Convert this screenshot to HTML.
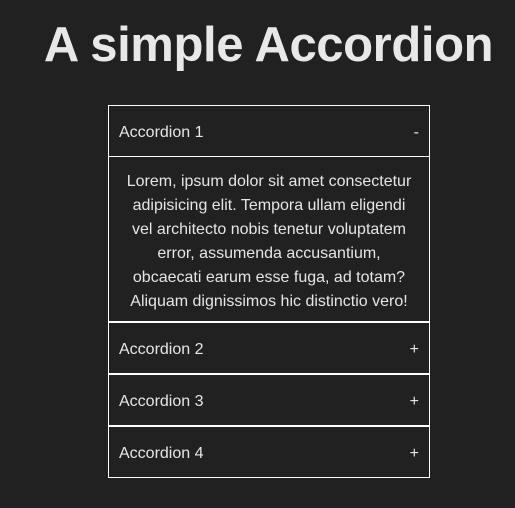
<!DOCTYPE html>
<html><head><style>
html,body{margin:0;padding:0;background:#212121;width:515px;height:508px;overflow:hidden;font-family:"Liberation Sans",sans-serif;color:#e6e6e6}
h1{position:absolute;top:15px;left:0;width:537px;margin:0;text-align:center;font-size:49px;font-weight:bold;line-height:60px;color:#e8e8e8;white-space:nowrap;letter-spacing:-0.4px}
.acc{position:absolute;left:108px;top:105px;width:322px}
.item{border:1px solid #fff;box-sizing:border-box}
.hd{height:50px;display:flex;align-items:center;justify-content:space-between;padding:3px 10px 0;box-sizing:border-box;font-size:16px}
.ct{border-top:1px solid #fff;padding:13px 16px 11px;text-align:center;font-size:16px;line-height:24px;height:165px;box-sizing:border-box}
</style></head><body>
<h1>A simple Accordion</h1>
<div class="acc">
<div class="item"><div class="hd"><span>Accordion 1</span><span>-</span></div>
<div class="ct">Lorem, ipsum dolor sit amet consectetur adipisicing elit. Tempora ullam eligendi vel architecto nobis tenetur voluptatem error, assumenda accusantium, obcaecati earum esse fuga, ad totam? Aliquam dignissimos hic distinctio vero!</div></div>
<div class="item"><div class="hd"><span>Accordion 2</span><span>+</span></div></div>
<div class="item"><div class="hd"><span>Accordion 3</span><span>+</span></div></div>
<div class="item"><div class="hd"><span>Accordion 4</span><span>+</span></div></div>
</div>
</body></html>
